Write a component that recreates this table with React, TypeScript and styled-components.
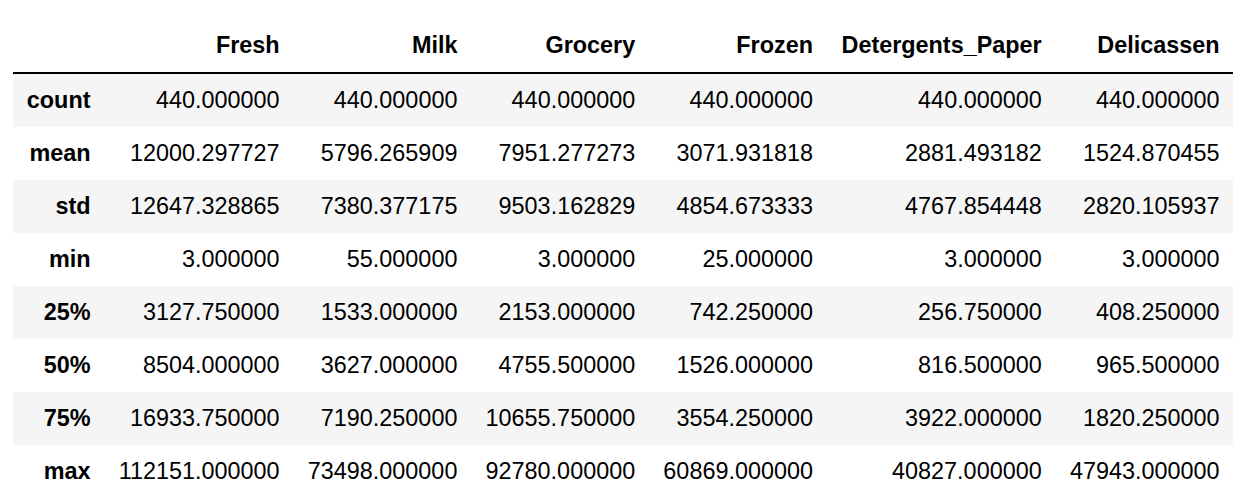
import React from "react";
import styled, { createGlobalStyle } from "styled-components";

const GlobalStyle = createGlobalStyle`
  html, body {
    margin: 0;
    padding: 0;
    background: #ffffff;
  }
  body {
    font-family: "Liberation Sans", Helvetica, Arial, sans-serif;
    color: #000000;
  }
`;

const Page = styled.div`
  padding: 19px 0 0 13px;
`;

const Table = styled.table`
  width: 1220px;
  border-collapse: separate;
  border-spacing: 0;
  font-size: 23.4px;
  line-height: normal;
  color: #000;
`;

const HeadCell = styled.th`
  height: 53px;
  padding: 0 13.5px;
  text-align: right;
  vertical-align: middle;
  font-weight: bold;
  white-space: nowrap;
  border-bottom: 2px solid #000;
`;

const Row = styled.tr<{ $striped: boolean }>`
  background: ${(p) => (p.$striped ? "#f5f5f5" : "#ffffff")};
`;

const IndexCell = styled.th`
  width: 64px;
  height: 53px;
  padding: 0 13.5px;
  text-align: right;
  vertical-align: middle;
  font-weight: bold;
  white-space: nowrap;
`;

const Cell = styled.td`
  height: 53px;
  padding: 0 13.5px;
  text-align: right;
  vertical-align: middle;
  white-space: nowrap;
`;

const columns = ["Fresh", "Milk", "Grocery", "Frozen", "Detergents_Paper", "Delicassen"];

const rows: [string, string[]][] = [
  ["count", ["440.000000", "440.000000", "440.000000", "440.000000", "440.000000", "440.000000"]],
  ["mean", ["12000.297727", "5796.265909", "7951.277273", "3071.931818", "2881.493182", "1524.870455"]],
  ["std", ["12647.328865", "7380.377175", "9503.162829", "4854.673333", "4767.854448", "2820.105937"]],
  ["min", ["3.000000", "55.000000", "3.000000", "25.000000", "3.000000", "3.000000"]],
  ["25%", ["3127.750000", "1533.000000", "2153.000000", "742.250000", "256.750000", "408.250000"]],
  ["50%", ["8504.000000", "3627.000000", "4755.500000", "1526.000000", "816.500000", "965.500000"]],
  ["75%", ["16933.750000", "7190.250000", "10655.750000", "3554.250000", "3922.000000", "1820.250000"]],
  ["max", ["112151.000000", "73498.000000", "92780.000000", "60869.000000", "40827.000000", "47943.000000"]],
];

export default function App() {
  return (
    <>
      <GlobalStyle />
      <Page>
        <Table>
          <thead>
            <tr>
              <HeadCell />
              {columns.map((c) => (
                <HeadCell key={c}>{c}</HeadCell>
              ))}
            </tr>
          </thead>
          <tbody>
            {rows.map(([label, values], i) => (
              <Row key={label} $striped={i % 2 === 0}>
                <IndexCell>{label}</IndexCell>
                {values.map((v, j) => (
                  <Cell key={j}>{v}</Cell>
                ))}
              </Row>
            ))}
          </tbody>
        </Table>
      </Page>
    </>
  );
}
